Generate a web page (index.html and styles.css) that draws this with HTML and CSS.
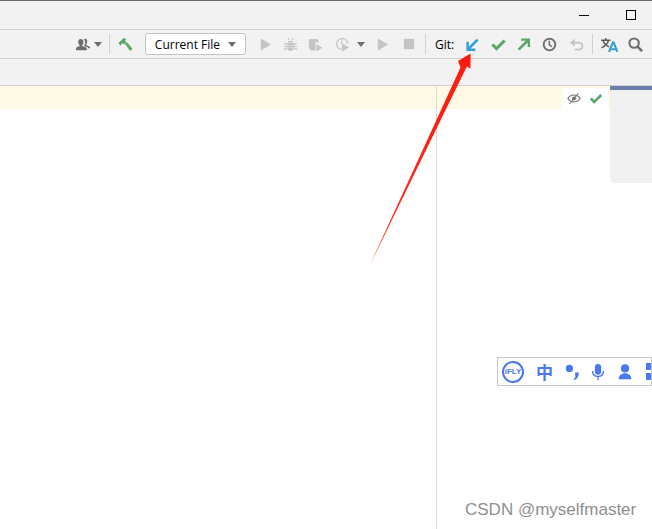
FILE: index.html
```html
<!DOCTYPE html>
<html lang="en">

<head>
  <meta charset="utf-8" />
  <title>IDE toolbar</title>
  <link rel="stylesheet" href="styles.css">
</head>

<body class="ide_page">
  <!-- title bar -->
  <div class="title_bar">
    <span class="win_min"></span>
    <span class="win_max"></span>
  </div>

  <!-- main toolbar -->
  <div class="tool_bar">
    <svg class="icon icon_user" viewBox="0 0 16 16"><path fill="#6e6e6e" d="M5 2.200c2 0 3 1.200 3 3 0 1.500-.6 2.600-1.300 3.200v1.100l3.800 1.500c.7.3 1 .8 1 1.500V14H0v-1.500c0-.7.3-1.200 1-1.500l2.800-1.400V8.400C3 7.800 2.400 6.700 2.400 5.200c0-1.800 .8-3 2.600-3z"/><path fill="#6e6e6e" d="M9 1.500c1.900 0 3 1.200 3 3 0 1.400-.5 2.500-1.200 3.100v1l3.400 1.400c.6.3.8.7.8 1.300V12h-2l-.5-1-3.800-1.500V8.800c.6-.8 1-2 1-3.500 0-1.200-.4-2.300-1.100-3 .2-.6.9-.8 1.400-.8z"/></svg>
    <span class="caret caret_user"></span>
    <span class="sep sep_a"></span>
    <svg class="icon icon_hammer" viewBox="0 0 16 16"><path fill="#59a869" d="M.5 6.500 6 1l3 1-1.500 2L9 5.500 6.500 8 5 6.500 2.500 9z"/><path fill="#59a869" d="M7.500 7.500 9.500 5.500l6 7L13 15z"/></svg>
    <button class="run_config">Current File <span class="caret caret_config"></span></button>
    <svg class="icon icon_play" viewBox="0 0 16 16"><path fill="#c4c4c4" d="M3 1.500 14 8 3 14.500z"/></svg>
    <svg class="icon icon_bug" viewBox="0 0 16 16"><g fill="#c4c4c4"><path d="M5.500 4.200h5v1.600h-5zM4.500 6.500h7V12c0 1.700-1.500 3-3.500 3s-3.500-1.300-3.500-3z"/><path d="M1 6.800 2 5.800l2.500 1.700v1.200zM15 6.800l-1-1-2.500 1.700v1.200zM1 9.200h3.500v1.200H1zM11.500 9.200H15v1.200h-3.500zM1.300 14l-1-1 4.200-2v1.300zM14.700 14l1-1-4.200-2v1.300zM4.700 1.800l1-.8 1.300 2.500H5.600zM11.300 1.800l-1-.8-1.300 2.500h1.400z"/></g><path stroke="#e4e4e4" stroke-width=".8" d="M4.500 9h7M4.500 11.500h7"/></svg>
    <svg class="icon icon_cover" viewBox="0 0 16 16"><path fill="#c4c4c4" d="M1 2h9l1 1v3.500L8 5v9.500H3.500C2 14 1 12 1 9.500z"/><path fill="#c4c4c4" d="M9 7.500 15.500 11.500 9 15.500z"/></svg>
    <svg class="icon icon_profile" viewBox="0 0 16 16"><path fill="none" stroke="#c4c4c4" stroke-width="1.500" d="M6.800 13.200A5.800 5.800 0 1 1 13.500 7"/><path fill="none" stroke="#c4c4c4" stroke-width="1.300" d="M7 3.800V7.500"/><path fill="#c4c4c4" d="M7.500 7 15 11.200 7.500 15.500z"/></svg>
    <span class="caret caret_profile"></span>
    <svg class="icon icon_run" viewBox="0 0 16 16"><path fill="#c4c4c4" d="M3 1.500 14 8 3 14.500z"/></svg>
    <svg class="icon icon_stop" viewBox="0 0 16 16"><rect fill="#c4c4c4" x="2" y="2" width="11" height="11"/></svg>
    <span class="sep sep_b"></span>
    <span class="git_label">Git:</span>
    <svg class="icon icon_update" viewBox="0 0 16 16"><path fill="#389fd6" d="M1.500 5h2.600v5.200L12.500 1.800 14.500 3.800 6 12.200h5V15H1.500z"/></svg>
    <svg class="icon icon_check" viewBox="0 0 16 16"><path fill="none" stroke="#59a869" stroke-width="3.200" d="M1.500 8l4.300 4.300L14.500 3.800"/></svg>
    <svg class="icon icon_push" viewBox="0 0 16 16"><path fill="#59a869" d="M15 1.500v9.200h-2.600V5.800L3.800 14.500 1.800 12.500 10.400 4H5.500V1.500z"/></svg>
    <svg class="icon icon_clock" viewBox="0 0 16 16"><circle cx="8" cy="8" r="6.200" fill="none" stroke="#6e6e6e" stroke-width="2"/><path fill="none" stroke="#6e6e6e" stroke-width="1.700" d="M7.800 4v4.400l3 1.800"/></svg>
    <svg class="icon icon_undo" viewBox="0 0 16 16"><path fill="none" stroke="#c4c4c4" stroke-width="2" d="M3 6h7.500a3.500 3.500 0 0 1 0 7.500H6"/><path fill="#c4c4c4" d="M6 1.500V10L1 6z"/></svg>
    <span class="sep sep_c"></span>
    <svg class="icon icon_translate" viewBox="0 0 18 16"><path fill="none" stroke="#5a5a5a" stroke-width="1.500" d="M0 3.500h10M5 1v2.500M8 3.500C7 7 4 10 .5 11.500M2 3.500C3 6.500 5 9 8.500 10.500"/><path fill="none" stroke="#389fd6" stroke-width="2.200" d="M8.500 16 12.500 6h1l4 10M10 13h6"/></svg>
    <svg class="icon icon_search" viewBox="0 0 16 16"><circle cx="6.500" cy="6.500" r="5" fill="none" stroke="#6e6e6e" stroke-width="2.200"/><path stroke="#6e6e6e" stroke-width="2.800" d="M10 10l5 5"/></svg>
  </div>

  <div class="tab_bar"></div>

  <!-- editor -->
  <div class="editor">
    <div class="editor_left">
      <div class="banner"></div>
    </div>
    <div class="editor_right">
      <div class="banner banner_right">
        <div class="inspect_box">
          <svg class="icon_eye" viewBox="0 0 16 16"><path fill="none" stroke="#6e6e6e" stroke-width="1.300" d="M1 8c2-3 4-4 7-4s5 1 7 4c-2 3-4 4-7 4s-5-1-7-4z"/><circle cx="8" cy="8" r="2.200" fill="#6e6e6e"/><path stroke="#6e6e6e" stroke-width="1.300" d="M3 14 13 2"/></svg>
          <svg class="icon_eye_check" viewBox="0 0 16 16"><path fill="none" stroke="#59a869" stroke-width="3" d="M2 8l4 4 8-8"/></svg>
        </div>
      </div>
      <div class="side_panel"></div>
    </div>
  </div>

  <!-- annotation arrow on top of the screenshot -->
  <svg class="arrow" viewBox="0 0 652 529"><defs><linearGradient id="arrowFade" x1="370" y1="266" x2="470" y2="60" gradientUnits="userSpaceOnUse"><stop offset="0" stop-color="#ff2a1a" stop-opacity=".35"/><stop offset=".05" stop-color="#ff2a1a"/><stop offset="1" stop-color="#ff1a10"/></linearGradient></defs><path fill="url(#arrowFade)" d="M369 267 460.500 67.500 458 61 470.500 53.500 470.500 68.500 466.800 66.500z"/></svg>

  <!-- input method bar -->
  <div class="ime_bar">
    <span class="ime_logo">iFLY</span>
    <span class="ime_lang">中</span>
    <svg class="ime_icon ime_comma" viewBox="0 0 20 20"><circle cx="6" cy="6" r="4" fill="#4a78f0"/><path fill="#4a78f0" d="M12.500 10.500h4c0 4-1.500 7-5 8.500l-1-1c1.500-1 2.300-2.500 2.500-4h-1z"/></svg>
    <svg class="ime_icon ime_mic" viewBox="0 0 20 20"><rect x="6.500" y="1" width="7" height="12" rx="3.500" fill="#4a78f0"/><path fill="none" stroke="#4a78f0" stroke-width="1.500" d="M4 9c0 4 2.500 6 6 6s6-2 6-6M10 15v4"/></svg>
    <svg class="ime_icon ime_user" viewBox="0 0 20 20"><circle cx="10" cy="6" r="4.500" fill="#4a78f0"/><path fill="#4a78f0" d="M3 18c0-4 3-6.500 7-6.500s7 2.500 7 6.500z"/></svg>
    <span class="ime_grid"><i></i><i></i></span>
  </div>

  <div class="watermark">CSDN @myselfmaster</div>
</body>

</html>
```

FILE: styles.css
```css
html,
body {
  height: 100%;
}

body {
  margin: 0;
  overflow: hidden;
  font-family: "Liberation Sans", sans-serif;
  background-color: #ffffff;
}

.title_bar {
  display: flex;
  align-items: center;
  justify-content: flex-end;
  box-sizing: border-box;
  height: 30px;
  padding: 0 16px 0 0;
  border-top: 1px solid #6a6a6a;
  border-bottom: 1px solid #d1d1d1;
  background-color: #f2f2f2;
}

.win_min {
  width: 10px;
  height: 1px;
  margin-right: 37px;
  background-color: #000000;
}

.win_max {
  box-sizing: border-box;
  width: 10px;
  height: 10px;
  border: 1px solid #000000;
}

.tool_bar {
  display: flex;
  align-items: center;
  box-sizing: border-box;
  height: 29px;
  padding-left: 76px;
  border-bottom: 1px solid #d1d1d1;
  background-color: #f2f2f2;
}

.icon {
  flex: none;
  width: 15px;
  height: 15px;
}

.caret {
  flex: none;
  width: 0;
  height: 0;
  border-left: 4px solid transparent;
  border-right: 4px solid transparent;
  border-top: 5px solid #6e6e6e;
}

.caret_user {
  margin-left: 3px;
}

.caret_config {
  display: inline-block;
  margin-left: 5px;
  vertical-align: 2px;
}

.caret_profile {
  margin-left: 7px;
}

.sep {
  flex: none;
  width: 1px;
  height: 20px;
  background-color: #d1d1d1;
}

.sep_a {
  margin-left: 7px;
}

.icon_hammer {
  margin-left: 8px;
}

.run_config {
  box-sizing: border-box;
  width: 101px;
  height: 22px;
  margin-left: 12px;
  padding: 0;
  border: 1px solid #c4c4c4;
  border-radius: 3px;
  background-color: #ffffff;
  color: #000000;
  font-family: "Open Sans", sans-serif;
  font-size: 12px;
}

.icon_play {
  margin-left: 12px;
}

.icon_bug {
  margin-left: 10px;
}

.icon_cover {
  margin-left: 10px;
}

.icon_profile {
  margin-left: 12px;
}

.icon_run {
  margin-left: 10px;
}

.icon_stop {
  margin-left: 12px;
}

.sep_b {
  margin-left: 8px;
}

.git_label {
  width: 20px;
  margin-left: 9px;
  color: #000000;
  font-family: "Open Sans", sans-serif;
  font-size: 12px;
}

.icon_update {
  margin-left: 10px;
}

.icon_check {
  margin-left: 11px;
}

.icon_push {
  margin-left: 10px;
}

.icon_clock {
  margin-left: 11px;
}

.icon_undo {
  margin-left: 12px;
}

.sep_c {
  margin-left: 8px;
}

.icon_translate {
  width: 17px;
  margin-left: 8px;
}

.icon_search {
  margin-left: 10px;
}

.tab_bar {
  box-sizing: border-box;
  height: 27px;
  border-bottom: 1px solid #d1d1d1;
  background-color: #f2f2f2;
}

.editor {
  display: flex;
  height: 443px;
}

.editor_left {
  flex: none;
  width: 436px;
  border-right: 1px solid #dcdcdc;
}

.editor_right {
  display: flex;
  flex: 1;
  align-items: flex-start;
}

.banner {
  height: 23px;
  background-color: #fff9e5;
}

.banner_right {
  display: flex;
  flex: 1;
  justify-content: flex-end;
  box-sizing: border-box;
  padding: 0 2px 0 0;
}

.inspect_box {
  display: flex;
  align-items: center;
  box-sizing: border-box;
  width: 46px;
  height: 21px;
  margin-top: 2px;
  padding: 0 5px;
  background-color: #ffffff;
}

.icon_eye {
  width: 15px;
  height: 15px;
}

.icon_eye_check {
  width: 15px;
  height: 15px;
  margin-left: 8px;
}

.side_panel {
  flex: none;
  width: 42px;
  height: 97px;
  border-top: 4px solid #6b7fab;
  box-sizing: border-box;
  border-bottom-left-radius: 4px;
  background-color: #f0f0f0;
}

.arrow {
  position: absolute;
  top: 0;
  left: 0;
  width: 652px;
  height: 529px;
}

.ime_bar {
  position: absolute;
  top: 357px;
  left: 497px;
  display: flex;
  align-items: center;
  box-sizing: border-box;
  width: 155px;
  height: 29px;
  padding-left: 4px;
  border: 1px solid #c8c8c8;
  background-color: #ffffff;
  overflow: hidden;
}

.ime_logo {
  flex: none;
  box-sizing: border-box;
  width: 22px;
  height: 22px;
  border: 2px solid #4a78f0;
  border-radius: 50%;
  color: #4a78f0;
  font-size: 8px;
  font-weight: bold;
  line-height: 18px;
  text-align: center;
}

.ime_lang {
  flex: none;
  margin-left: 12px;
  color: #4a78f0;
  font-family: "Noto Sans CJK SC", sans-serif;
  font-size: 17px;
  font-weight: bold;
}

.ime_icon {
  flex: none;
  width: 18px;
  height: 18px;
}

.ime_comma {
  margin-left: 11px;
}

.ime_mic {
  margin-left: 7px;
}

.ime_user {
  margin-left: 9px;
}

.ime_grid {
  display: flex;
  flex: none;
  flex-direction: column;
  gap: 3px;
  margin-left: 12px;
}

.ime_grid i {
  display: block;
  width: 8px;
  height: 7px;
  background-color: #4a78f0;
}

.watermark {
  position: absolute;
  top: 500px;
  left: 465px;
  color: #8f8f8f;
  font-size: 17px;
  white-space: nowrap;
}
```
